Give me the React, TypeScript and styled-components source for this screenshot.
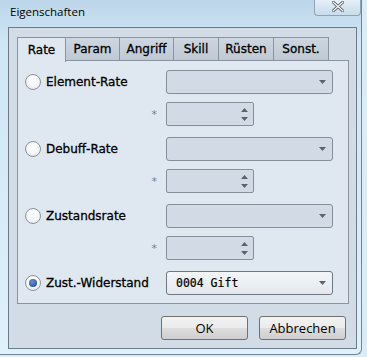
import styled, { createGlobalStyle } from "styled-components";

const GlobalStyle = createGlobalStyle`
  html, body {
    margin: 0;
    padding: 0;
    width: 367px;
    height: 357px;
    overflow: hidden;
    background: #dcecf7;
  }
  * {
    box-sizing: border-box;
  }
`;

const Frame = styled.div`
  width: 362px;
  height: 355px;
  padding: 0 4px 5px 8px;
  display: flex;
  flex-direction: column;
  background: linear-gradient(180deg, #bcd6ea 0%, #cfe6f5 12%, #d6ecf8 60%, #dff1fb 100%);
  border-right: 1px solid #6f8596;
  border-bottom: 1px solid #6f8596;
  border-bottom-right-radius: 6px;
  font-family: "Open Sans", "Liberation Sans", sans-serif;
`;

const TitleBar = styled.div`
  height: 27px;
  display: flex;
  align-items: flex-start;
  justify-content: space-between;
`;

const Title = styled.span`
  margin: 4px 0 0 2px;
  font-size: 11.5px;
  color: #000;
`;

const CloseButton = styled.div`
  width: 47px;
  height: 18px;
  margin-top: -2px;
  margin-right: -4px;
  display: flex;
  align-items: center;
  justify-content: center;
  border: 1px solid #8ea3b4;
  border-top: none;
  border-radius: 0 0 4px 4px;
  background: linear-gradient(180deg, #eaf3fa 0%, #d6e6f2 50%, #c8dcec 100%);
`;

const Client = styled.div`
  flex: 1;
  display: flex;
  flex-direction: column;
  padding: 9px 9px 0 8px;
  border: 1px solid #6d7b88;
  background: #d2dce7;
`;

const TabBar = styled.div`
  display: flex;
  height: 24px;
`;

const Tab = styled.div<{ $active?: boolean; $w: number }>`
  width: ${(p) => p.$w}px;
  height: ${(p) => (p.$active ? 25 : 24)}px;
  margin-left: -1px;
  display: flex;
  align-items: center;
  justify-content: center;
  font-family: "DejaVu Sans", sans-serif;
  font-size: 12px;
  -webkit-text-stroke: 0.3px #000;
  color: #000;
  border: 1px solid #8a949f;
  border-bottom: ${(p) => (p.$active ? "none" : "1px solid #8a949f")};
  background: ${(p) =>
    p.$active ? "#dfe7f1" : "linear-gradient(180deg, #cdd6e0 0%, #bfc9d4 100%)"};
  position: relative;
  z-index: ${(p) => (p.$active ? 1 : 0)};
  &:first-child {
    margin-left: 0;
  }
`;

const Panel = styled.div`
  width: 332px;
  height: 244px;
  margin-top: -1px;
  padding: 9px 15px 0 7px;
  border: 1px solid #8a949f;
  background: #dfe7f1;
  display: flex;
  flex-direction: column;
  gap: 11px;
`;

const Section = styled.div`
  display: grid;
  grid-template-columns: 141px 167px;
  grid-auto-rows: auto;
  row-gap: 8px;
`;

const LabelCell = styled.label`
  display: flex;
  align-items: center;
  gap: 5px;
  font-family: "DejaVu Sans", sans-serif;
  font-size: 12px;
  -webkit-text-stroke: 0.3px #000;
  color: #000;
`;

const Radio = styled.span<{ $checked?: boolean }>`
  width: 16px;
  height: 16px;
  border-radius: 50%;
  border: 1px solid #8e949b;
  background: radial-gradient(circle at 50% 35%, #ffffff 0%, #f4f6f8 55%, #d9dee4 100%);
  display: flex;
  align-items: center;
  justify-content: center;
  &::after {
    content: "";
    display: ${(p) => (p.$checked ? "block" : "none")};
    width: 8px;
    height: 8px;
    border-radius: 50%;
    background: radial-gradient(circle at 40% 35%, #6f8fd0 0%, #2f56a8 70%, #24468e 100%);
  }
`;

const Star = styled.span`
  display: flex;
  justify-content: flex-end;
  align-items: center;
  padding-right: 9px;
  font-family: "DejaVu Sans", sans-serif;
  font-size: 11px;
  color: #7a828b;
`;

const Combo = styled.div<{ $enabled?: boolean }>`
  height: 24px;
  display: flex;
  align-items: center;
  justify-content: space-between;
  padding: 0 6px 0 9px;
  border: 1px solid ${(p) => (p.$enabled ? "#6f7780" : "#858f9a")};
  border-radius: 3px;
  background: ${(p) =>
    p.$enabled ? "linear-gradient(180deg, #f3f5f8 0%, #e4e8ee 100%)" : "#d2dbe5"};
  font-family: "DejaVu Sans Mono", monospace;
  font-size: 11.5px;
  -webkit-text-stroke: 0.2px #000;
  color: #000;
`;

const Spin = styled.div`
  width: 88px;
  height: 24px;
  display: flex;
  align-items: center;
  justify-content: flex-end;
  padding-right: 5px;
  border: 1px solid #858f9a;
  border-radius: 2px;
  background: #d2dbe5;
`;

const SpinArrows = styled.div`
  display: flex;
  flex-direction: column;
  gap: 5px;
`;

const Footer = styled.div`
  display: flex;
  justify-content: flex-end;
  gap: 11px;
  padding: 12px 1px 0 0;
`;

const Button = styled.div<{ $w: number }>`
  width: ${(p) => p.$w}px;
  height: 24px;
  display: flex;
  align-items: center;
  justify-content: center;
  border: 1px solid #707070;
  border-radius: 3px;
  background: linear-gradient(180deg, #f2f2f2 0%, #ebebeb 48%, #dddddd 52%, #cfcfcf 100%);
  font-family: "Open Sans", "Liberation Sans", sans-serif;
  font-size: 13px;
  color: #000;
`;

const Arrow = ({ up }: { up?: boolean }) => (
  <svg width="7" height="4" viewBox="0 0 7 4">
    <path d={up ? "M0 4 L3.5 0 L7 4 Z" : "M0 0 L7 0 L3.5 4 Z"} fill="#5c636b" />
  </svg>
);

const rows = [
  { label: "Element-Rate", spin: true },
  { label: "Debuff-Rate", spin: true },
  { label: "Zustandsrate", spin: true },
  { label: "Zust.-Widerstand", spin: false, checked: true, value: "0004 Gift" },
];

const tabs = [
  { name: "Rate", w: 49 },
  { name: "Param", w: 55 },
  { name: "Angriff", w: 55 },
  { name: "Skill", w: 46 },
  { name: "Rüsten", w: 56 },
  { name: "Sonst.", w: 56 },
];

export default function App() {
  return (
    <>
      <GlobalStyle />
      <Frame>
        <TitleBar>
          <Title>Eigenschaften</Title>
          <CloseButton>
            <svg width="12" height="11" viewBox="0 0 12 11">
              <path
                d="M1 1 L11 10 M11 1 L1 10"
                stroke="#4d5560"
                strokeWidth="3"
                strokeLinecap="round"
              />
              <path
                d="M1 1 L11 10 M11 1 L1 10"
                stroke="#ffffff"
                strokeWidth="1.2"
                strokeLinecap="round"
              />
            </svg>
          </CloseButton>
        </TitleBar>
        <Client>
          <TabBar>
            {tabs.map((t, i) => (
              <Tab key={t.name} $w={t.w} $active={i === 0}>
                {t.name}
              </Tab>
            ))}
          </TabBar>
          <Panel>
            {rows.map((r) => (
              <Section key={r.label}>
                <LabelCell>
                  <Radio $checked={r.checked} />
                  {r.label}
                </LabelCell>
                <Combo $enabled={!!r.value}>
                  <span>{r.value}</span>
                  <Arrow />
                </Combo>
                {r.spin && (
                  <>
                    <Star>*</Star>
                    <Spin>
                      <SpinArrows>
                        <Arrow up />
                        <Arrow />
                      </SpinArrows>
                    </Spin>
                  </>
                )}
              </Section>
            ))}
          </Panel>
          <Footer>
            <Button $w={87}>OK</Button>
            <Button $w={87}>Abbrechen</Button>
          </Footer>
        </Client>
      </Frame>
    </>
  );
}
